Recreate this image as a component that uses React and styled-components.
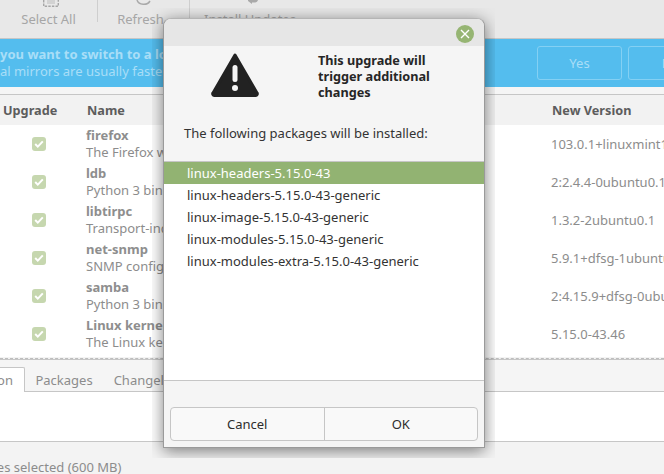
import React from 'react';
import styled, { createGlobalStyle } from 'styled-components';

const packages = [
  { name: 'firefox', desc: 'The Firefox web browser', version: '103.0.1+linuxmint1' },
  { name: 'ldb', desc: 'Python 3 bindings for LDB', version: '2:2.4.4-0ubuntu0.1' },
  { name: 'libtirpc', desc: 'Transport-independent RPC', version: '1.3.2-2ubuntu0.1' },
  { name: 'net-snmp', desc: 'SNMP configuration', version: '5.9.1+dfsg-1ubuntu2' },
  { name: 'samba', desc: 'Python 3 bindings for Samba', version: '2:4.15.9+dfsg-0ubuntu' },
  { name: 'Linux kernel', desc: 'The Linux kernel', version: '5.15.0-43.46' },
];

const installs = [
  'linux-headers-5.15.0-43',
  'linux-headers-5.15.0-43-generic',
  'linux-image-5.15.0-43-generic',
  'linux-modules-5.15.0-43-generic',
  'linux-modules-extra-5.15.0-43-generic',
];

const GlobalStyle = createGlobalStyle`
  html, body {
    margin: 0;
    padding: 0;
    background: #f3f3f3;
  }
  * {
    box-sizing: border-box;
  }
`;

const Page = styled.div`
  position: relative;
  width: 664px;
  height: 474px;
  overflow: hidden;
  display: flex;
  flex-direction: column;
  background: #f3f3f3;
  font-family: 'Noto Sans', sans-serif;
  font-size: 13px;
  color: #8c8c8c;
`;

const Toolbar = styled.div`
  height: 39px;
  flex: none;
  display: flex;
  background: #e8e8e8;
  border-bottom: 1px solid #c6c6c6;
`;

const ToolButton = styled.div`
  width: ${(p) => p.$width}px;
  margin-right: ${(p) => p.$gap || 0}px;
  display: flex;
  flex-direction: column;
  align-items: center;
  height: 27px;
  color: #a6a6a6;
  svg {
    display: block;
    flex: none;
    height: 7px;
    margin: 0 0 3px 5px;
  }
`;

const ToolDivider = styled.div`
  width: 1px;
  height: 22px;
  flex: none;
  background: #cecece;
`;

const Banner = styled.div`
  width: 713px;
  height: 48px;
  flex: none;
  display: flex;
  align-items: center;
  gap: 6px;
  background: #54bdee;
  color: #a9def7;
  overflow: hidden;
`;

const BannerText = styled.div`
  flex: 1;
  min-width: 0;
  margin-left: -21px;
  white-space: nowrap;
  line-height: 17px;
`;

const BannerTitle = styled.div`
  font-weight: 700;
`;

const BannerButton = styled.div`
  width: 85px;
  height: 34px;
  flex: none;
  display: flex;
  align-items: center;
  justify-content: center;
  border: 1px solid #84d0f3;
  border-radius: 3px;
  color: #a9def7;
`;

const Spacer = styled.div`
  height: 8px;
  flex: none;
  background: #f5f5f5;
  border-bottom: 1px solid #c6c6c6;
`;

const Row = styled.div`
  display: grid;
  grid-template-columns: 86px 465px 1fr;
  align-items: center;
  white-space: nowrap;
`;

const HeaderRow = styled(Row)`
  height: 30px;
  flex: none;
  background: #f2f2f2;
  font-weight: 700;
  font-size: 12.7px;
  color: #5d5d5d;
`;

const HeaderCell = styled.div`
  padding-left: ${(p) => p.$inset}px;
`;

const List = styled.div`
  height: 232px;
  flex: none;
  background: #fff;
  overflow: hidden;
`;

const PackageRow = styled(Row)`
  height: 38px;
  line-height: 17px;
`;

const CheckCell = styled.div`
  padding-left: 32px;
`;

const Check = styled.div`
  width: 14px;
  height: 14px;
  border-radius: 3px;
  background: #c6d7af;
  display: flex;
  align-items: center;
  justify-content: center;
`;

const PackageName = styled.div`
  font-weight: 700;
  color: #8e8e8e;
`;

const Dashed = styled.div`
  height: 2px;
  flex: none;
  border-bottom: 1px dashed #bdbdbd;
`;

const TabBar = styled.div`
  height: 33px;
  flex: none;
  display: flex;
  align-items: flex-end;
  border-top: 1px solid #c6c6c6;
  background: #f5f5f5;
  box-shadow: inset 0 -1px 0 #c6c6c6;
`;

const Tab = styled.div`
  height: 25px;
  padding: 0 10.5px;
  display: flex;
  align-items: center;
  ${(p) =>
    p.$active &&
    `
    margin-left: -69px;
    padding: 0 11px;
    background: #fff;
    border: 1px solid #c6c6c6;
    border-bottom: 0;
    border-radius: 0 2px 0 0;
    color: #8c8c8c;
  `}
`;

const TabPane = styled.div`
  height: 50px;
  flex: none;
  background: #fff;
  border-bottom: 1px solid #c6c6c6;
`;

const StatusBar = styled.div`
  flex: 1;
  display: flex;
  align-items: center;
  padding-top: 16px;
  margin-left: -50px;
  white-space: nowrap;
`;

/* wm shadow gets cut off at the window bounds, so it's clipped by this layer */
const ShadowClip = styled.div`
  position: absolute;
  left: 152px;
  top: 8px;
  width: 343px;
  height: 450px;
  overflow: hidden;
  padding: 10px 0 0 11px;
`;

const Dialog = styled.div`
  width: 322px;
  height: 430px;
  display: flex;
  flex-direction: column;
  background: #f5f5f5;
  border: 1px solid #9a9a9a;
  border-top-color: #b5b5b5;
  border-radius: 8px 8px 0 0;
  box-shadow: 0 3px 16px rgba(0, 0, 0, 0.5);
  color: #2d2d2d;
`;

const TitleBar = styled.div`
  height: 27px;
  flex: none;
  display: flex;
  align-items: center;
  justify-content: flex-end;
  padding: 2px 10px 0 0;
  background: #e6e6e6;
  border-radius: 7px 7px 0 0;
`;

const CloseButton = styled.div`
  width: 18px;
  height: 18px;
  border-radius: 50%;
  background: #96b573;
  display: flex;
  align-items: center;
  justify-content: center;
`;

const Message = styled.div`
  display: flex;
  height: 75px;
  flex: none;
  padding: 6px 0 0 46px;
`;

const WarningIcon = styled.svg`
  width: 50px;
  height: 46px;
  flex: none;
`;

const Heading = styled.div`
  margin-left: 58px;
  font-weight: 700;
  font-size: 12.7px;
  line-height: 16px;
  color: #262626;
`;

const Lead = styled.div`
  height: 40px;
  flex: none;
  padding: 3px 0 0 20px;
  line-height: 18px;
  color: #333;
`;

const InstallList = styled.div`
  height: 220px;
  flex: none;
  background: #fff;
  border-top: 1px solid #c6c6c6;
  border-bottom: 1px solid #c6c6c6;
`;

const InstallRow = styled.div`
  height: 22px;
  padding-left: 23px;
  display: flex;
  align-items: center;
  color: ${(p) => (p.$selected ? '#fff' : '#333')};
  background: ${(p) => (p.$selected ? '#92b372' : 'transparent')};
`;

const Actions = styled.div`
  flex: 1;
  display: flex;
  align-items: flex-end;
  padding: 0 6px 6px;
`;

const ActionGroup = styled.div`
  width: 308px;
  height: 34px;
  display: flex;
  background: #f9f9f9;
  border: 1px solid #c6c6c6;
  border-radius: 4px;
`;

const ActionButton = styled.div`
  flex: 1;
  display: flex;
  align-items: center;
  justify-content: center;
  color: #2d2d2d;
  & + & {
    border-left: 1px solid #c6c6c6;
  }
`;

export default function App() {
  return (
    <Page>
      <GlobalStyle />
      <Toolbar>
        <ToolButton $width={97}>
          <svg width="16" height="7" viewBox="0 0 16 7">
            <rect x="4" y="0" width="8" height="4" fill="#d2d2d2" />
            <path
              d="M.7 0v6.2h14.6V0"
              fill="none"
              stroke="#a6a6a6"
              strokeWidth="1.4"
              strokeDasharray="2.4 1.2"
            />
          </svg>
          Select All
        </ToolButton>
        <ToolDivider />
        <ToolButton $width={85} $gap={6}>
          <svg width="15" height="7" viewBox="0 0 15 7">
            <path d="M1 0a7 6 0 0 0 13 1" fill="none" stroke="#a9a9a9" strokeWidth="1.5" />
          </svg>
          Refresh
        </ToolButton>
        <ToolDivider />
        <ToolButton $width={120}>
          <svg width="10" height="7" viewBox="0 0 10 7">
            <path d="M0 1l4 3V2.4h3c1.5 0 2.5-1 3-2.4H0z" fill="#a9a9a9" />
          </svg>
          Install Updates
        </ToolButton>
      </Toolbar>
      <Banner>
        <BannerText>
          <BannerTitle>Do you want to switch to a local mirror?</BannerTitle>
          <div>Local mirrors are usually faster than packages.linuxmint.com</div>
        </BannerText>
        <BannerButton>Yes</BannerButton>
        <BannerButton>No</BannerButton>
      </Banner>
      <Spacer />
      <HeaderRow>
        <HeaderCell $inset={3}>Upgrade</HeaderCell>
        <HeaderCell $inset={1}>Name</HeaderCell>
        <HeaderCell $inset={1}>New Version</HeaderCell>
      </HeaderRow>
      <List>
        {packages.map((pkg) => (
          <PackageRow key={pkg.name}>
            <CheckCell>
              <Check>
                <svg width="10" height="8" viewBox="0 0 10 8">
                  <path d="M1.2 4l2.6 2.6L8.8 1.4" fill="none" stroke="#fff" strokeWidth="2" />
                </svg>
              </Check>
            </CheckCell>
            <div>
              <PackageName>{pkg.name}</PackageName>
              <div>{pkg.desc}</div>
            </div>
            <div>{pkg.version}</div>
          </PackageRow>
        ))}
      </List>
      <Dashed />
      <TabBar>
        <Tab $active>Description</Tab>
        <Tab>Packages</Tab>
        <Tab>Changelog</Tab>
      </TabBar>
      <TabPane />
      <StatusBar>6 updates selected (600 MB)</StatusBar>

      <ShadowClip>
        <Dialog>
          <TitleBar>
            <CloseButton>
              <svg width="10" height="10" viewBox="0 0 10 10">
                <path d="M1 1l8 8M9 1l-8 8" stroke="#fff" strokeWidth="1.4" />
              </svg>
            </CloseButton>
          </TitleBar>
          <Message>
            <WarningIcon viewBox="0 0 50 46">
              <path
                d="M25 3L47 41a1.5 1.5 0 0 1-1.3 2.4H4.3A1.5 1.5 0 0 1 3 41z"
                fill="#222"
                stroke="#222"
                strokeWidth="3"
                strokeLinejoin="round"
              />
              <rect x="22.5" y="13" width="5" height="17" rx="2.5" fill="#f5f5f5" />
              <circle cx="25" cy="36" r="3" fill="#f5f5f5" />
            </WarningIcon>
            <Heading>
              This upgrade will
              <br />
              trigger additional
              <br />
              changes
            </Heading>
          </Message>
          <Lead>The following packages will be installed:</Lead>
          <InstallList>
            {installs.map((item, i) => (
              <InstallRow key={item} $selected={i === 0}>
                {item}
              </InstallRow>
            ))}
          </InstallList>
          <Actions>
            <ActionGroup>
              <ActionButton>Cancel</ActionButton>
              <ActionButton>OK</ActionButton>
            </ActionGroup>
          </Actions>
        </Dialog>
      </ShadowClip>
    </Page>
  );
}
